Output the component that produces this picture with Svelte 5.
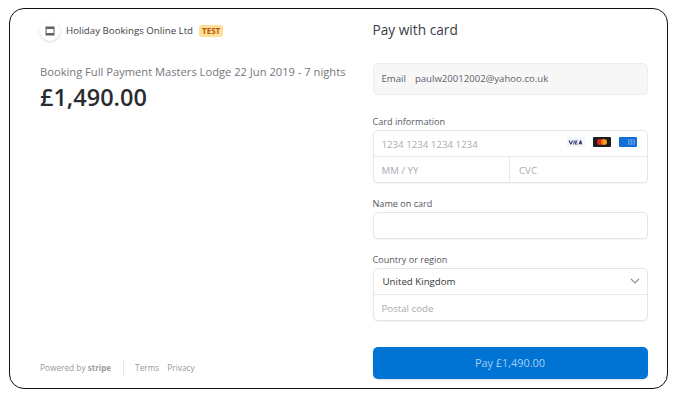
<script>
  const price = '£1,490.00';
</script>

<div class="frame">
  <section class="summary">
    <header class="merchant">
      <span class="logo">
        <svg width="10" height="10" viewBox="0 0 10 10">
          <rect x="0.5" y="0.5" width="9" height="2" fill="#5d6068" />
          <rect x="1" y="2.5" width="8" height="6.5" fill="none" stroke="#5d6068" stroke-width="1" />
          <rect x="1" y="7" width="8" height="2" fill="#5d6068" />
        </svg>
      </span>
      <span class="name">Holiday Bookings Online Ltd</span>
      <span class="badge">TEST</span>
    </header>
    <p class="desc">Booking Full Payment Masters Lodge 22 Jun 2019 - 7 nights</p>
    <p class="amount">{price}</p>
    <footer class="foot">
      <span class="powered">Powered by <b>stripe</b></span>
      <span class="links">
        <span>Terms</span>
        <span>Privacy</span>
      </span>
    </footer>
  </section>

  <form class="pay">
    <h1>Pay with card</h1>
    <div class="email">
      <span class="email-label">Email</span>
      <span class="email-value">paulw20012002@yahoo.co.uk</span>
    </div>

    <div class="label first">Card information</div>
    <div class="group">
      <div class="row card">
        <span class="ph">1234 1234 1234 1234</span>
        <span class="brands">
          <svg width="18" height="10" viewBox="0 0 18 10">
            <rect width="18" height="10" rx="1" fill="#f4f5f8" />
            <path d="M1.500 3.500h1.500l.8 3 1.200-3h1.100l-1.700 4h-1.100zM6.800 3.500h1l-.6 4h-1zM8.500 3.500h2.200l-.1.800h-1.200l-.1.700h1l-.1.800h-1l-.1.900h1.200l-.1.800h-2.200zM13 3.500h1.200l1 4h-.9l-.2-.8h-1.200l-.4.800h-1.100z" fill="#262c6e" />
          </svg>
          <svg width="18" height="10" viewBox="0 0 18 10">
            <rect width="18" height="10" rx="1" fill="#1d1d1f" />
            <circle cx="7" cy="5" r="3" fill="#e3261c" />
            <circle cx="11" cy="5" r="3" fill="#f59f18" />
            <rect x="8.200" y="3" width="1.600" height="4" fill="#f56a14" />
          </svg>
          <svg width="18" height="10" viewBox="0 0 18 10">
            <rect width="18" height="10" rx="1" fill="#0f6fd6" />
            <path d="M9 3h7M9 5h7M9 7h7" fill="none" stroke="#a9cdf3" stroke-width="1" />
            <path d="M11 2v6M14 2v6" fill="none" stroke="#0f6fd6" stroke-width="1" />
          </svg>
        </span>
      </div>
      <div class="row split">
        <span class="ph cell">MM / YY</span>
        <span class="ph cell cvc">CVC</span>
      </div>
    </div>

    <div class="label">Name on card</div>
    <div class="group"><div class="row"></div></div>

    <div class="label">Country or region</div>
    <div class="group">
      <div class="row select">
        <span>United Kingdom</span>
        <svg width="10" height="6" viewBox="0 0 10 6">
          <path d="M1 1l4 4 4-4" fill="none" stroke="#8a8d93" stroke-width="1.100" />
        </svg>
      </div>
      <div class="row postal"><span class="ph">Postal code</span></div>
    </div>

    <button type="button" class="submit">Pay {price}</button>
  </form>
</div>

<style>
  :global(body) {
    background: #fff;
    font-family: "Open Sans", "Noto Sans", sans-serif;
  }

  .frame {
    box-sizing: border-box;
    width: 659px;
    height: 381px;
    margin: 8px 0 0 9px;
    border: 1.500px solid #111;
    border-radius: 15px;
    background: #fff;
    display: grid;
    grid-template-columns: 362.500px 1fr;
  }

  .summary {
    display: flex;
    flex-direction: column;
    padding: 11px 0 13px 30px;
  }

  .merchant {
    display: flex;
    align-items: center;
    height: 21px;
  }

  .logo {
    width: 20px;
    height: 20px;
    border-radius: 50%;
    background: #fff;
    box-shadow: 0 1px 3px rgba(0, 0, 0, 0.16);
    display: flex;
    align-items: center;
    justify-content: center;
    margin-right: 6px;
  }

  .name {
    font-size: 9.700px;
    color: #3c4048;
  }

  .badge {
    margin-left: 6px;
    background: #ffdf9b;
    color: #b5560a;
    border-radius: 3px;
    font-size: 8px;
    font-weight: 700;
    line-height: 12px;
    padding: 0 3px;
  }

  .desc {
    margin: 23px 0 0;
    font-size: 11.170px;
    line-height: 16px;
    color: #74777e;
    white-space: nowrap;
  }

  .amount {
    margin: 0;
    font-size: 23.500px;
    line-height: 34px;
    font-weight: 600;
    color: #2a2c31;
  }

  .foot {
    margin-top: auto;
    display: flex;
    align-items: center;
    font-size: 8.300px;
    line-height: 14px;
    color: #97999e;
  }

  .powered {
    padding-right: 12px;
    border-right: 1px solid #e6e6e8;
  }

  .powered b {
    font-size: 8px;
    color: #9b9da2;
  }

  .links {
    display: flex;
    gap: 8px;
    margin-left: 11px;
  }

  .pay {
    display: flex;
    flex-direction: column;
    width: 275px;
    padding-top: 9.500px;
  }

  h1 {
    margin: 0;
    font-size: 13.700px;
    line-height: 22px;
    font-weight: 400;
    color: #3a3d44;
  }

  .email {
    margin-top: 22px;
    height: 32px;
    box-sizing: border-box;
    border: 1px solid #ededef;
    border-radius: 5px;
    background: #f7f7f8;
    display: flex;
    align-items: center;
    padding-left: 8px;
    font-size: 9.600px;
    color: #5f6269;
  }

  .email-value {
    margin-left: 9px;
  }

  .label {
    margin-top: 13px;
    font-size: 9.100px;
    line-height: 16px;
    color: #55585f;
  }

  .label.first {
    margin-top: 19px;
  }

  .group {
    border: 1px solid #e6e6e9;
    border-radius: 5px;
    background: #fff;
    box-shadow: 0 1px 2px rgba(0, 0, 0, 0.06);
  }

  .row {
    box-sizing: border-box;
    height: 25px;
    display: flex;
    align-items: center;
    padding: 0 8px;
    font-size: 9.700px;
  }

  .row + .row {
    height: 26px;
    border-top: 1px solid #e8e8ea;
  }

  .ph {
    color: #a9abb0;
  }

  .card {
    justify-content: space-between;
    padding-top: 2px;
    padding-right: 10px;
  }

  .brands {
    display: flex;
    gap: 8px;
    margin-top: -5px;
  }

  .split {
    padding: 0;
  }

  .cell {
    flex: 1;
    padding-left: 8px;
    line-height: 27px;
    height: 25px;
  }

  .cvc {
    border-left: 1px solid #e8e8ea;
    padding-left: 9px;
  }

  .select {
    justify-content: space-between;
    padding-left: 9px;
    padding-right: 7px;
    color: #33363c;
  }

  .postal {
    padding-top: 2px;
  }

  .submit {
    margin-top: 26px;
    height: 32px;
    border: 0;
    border-radius: 5px;
    background: #0074d4;
    color: #a8cdf0;
    font-family: inherit;
    font-size: 10.900px;
    box-shadow: 0 1px 2px rgba(0, 0, 0, 0.12);
  }
</style>
